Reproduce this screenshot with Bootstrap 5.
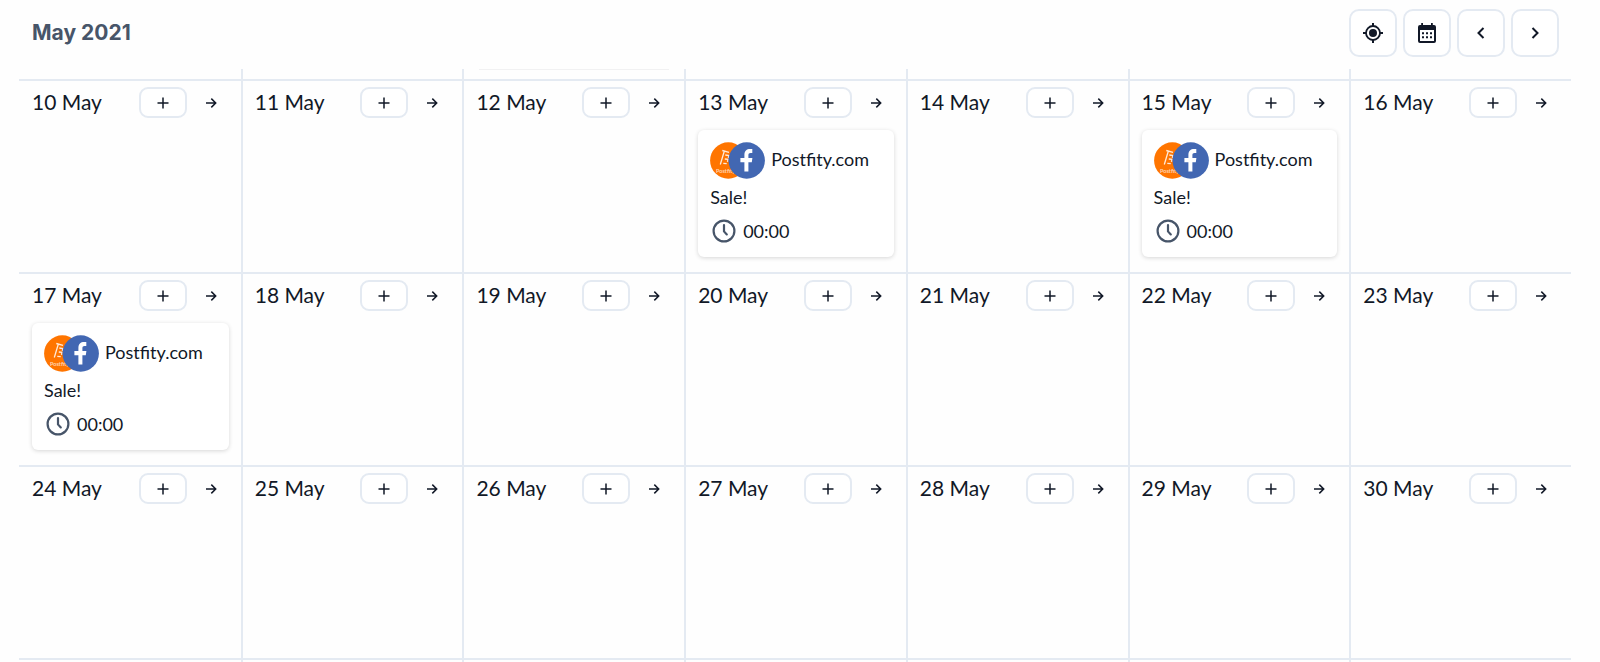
<!DOCTYPE html>
<html lang="en">
<head>
<meta charset="utf-8">
<meta name="viewport" content="width=device-width, initial-scale=1">
<title>Post calendar – May 2021</title>
<link rel="stylesheet" href="https://cdn.jsdelivr.net/npm/bootstrap@5.3.0/dist/css/bootstrap.min.css">
<style>
  :root { --line: #e4eaf2; --ink: #111827; --slate: #475569; }
  body { font-family: Lato, sans-serif; color: var(--ink); background: #fefefe; }
  .planner { padding: 0 29px 0 19px; height: 100vh; overflow: hidden; }
  .planner-head { padding: 9px 12px 12px 13px; flex: none; }
  .month-title { font: 700 21px/28px Inter, sans-serif; color: var(--slate); }
  .tool-row { gap: 6px; }
  .tool-btn, .add-btn { background: #fff; border: 2px solid var(--line); color: var(--ink); padding: 0; display: flex; align-items: center; justify-content: center; }
  .tool-btn { width: 48px; height: 48px; border-radius: 10px; }
  .add-btn { width: 48px; height: 31px; border-radius: 9px; }
  .go-btn { width: 36px; height: 31px; padding: 0; border: 0; color: var(--ink); background: none; display: flex; align-items: center; justify-content: center; margin-left: 6px; }
  .week { display: grid; grid-template-columns: repeat(7, minmax(0, 1fr)); border-bottom: 2px solid var(--line); min-height: 193px; }
  .week-past { min-height: 12px; height: 12px; }
  .day { padding: 6px 12px 14px; }
  .day:first-child { padding-left: 13px; }
  .day + .day { border-left: 2px solid var(--line); }
  .week-past .day { padding: 0 12px; }
  .card-edge { height: 1px; margin: 0 3px; background: #f1f1f2; }
  .day-label { font-size: 21px; line-height: 30px; }
  .post { margin-top: 12px; padding: 12px; border-radius: 6px; background: #fff; box-shadow: 0 1px 4px rgba(0, 0, 0, .16); font-size: 18px; line-height: 28px; }
  .post-author { gap: 6px; height: 37px; line-height: 35px; }
  .post-text { margin-top: 4px; }
  .post-time { margin-top: 6px; gap: 7px; padding-left: 2px; }
  svg { display: block; flex: none; }
</style>
</head>
<body>
<svg class="d-none" aria-hidden="true">
  <symbol id="i-plus" viewBox="0 0 12 12"><path d="M6 .5v11M.5 6h11" fill="none" stroke="currentColor" stroke-width="1.5"/></symbol>
  <symbol id="i-arrow" viewBox="0 0 12 12"><path d="M1 6h9.500M6.300 1.600 10.700 6l-4.400 4.400" fill="none" stroke="currentColor" stroke-width="1.500"/></symbol>
  <symbol id="i-clock" viewBox="0 0 24 24"><circle cx="12" cy="12" r="10.400" fill="none" stroke="#475569" stroke-width="2.200"/><path d="M12 6v6.400l2.800 3" fill="none" stroke="#475569" stroke-width="2.200" stroke-linecap="round"/></symbol>
  <symbol id="i-accounts" viewBox="0 0 55 37">
    <circle cx="18.300" cy="18.500" r="18.200" fill="#ff7500"/>
    <path d="M12.300 8.500 19 10.300M14.200 9.500 10.300 22.500M15.300 13l3.500.5-.4 2.500M14.800 17l3.200.4-.5 2.500M13.300 21.300l3.400.4" fill="none" stroke="#fff" stroke-opacity=".85" stroke-width="1.300"/>
    <text x="6" y="31" font-family="Lato, sans-serif" font-size="5.500" font-weight="700" fill="#fff" fill-opacity=".7">Postfity</text>
    <circle cx="36.700" cy="18.500" r="18.200" fill="#4267b2"/>
    <path d="M34.400 29.500V20.300h-4v-4.300h4v-3.200c0-3.900 2.300-5.900 5.700-5.900.9 0 1.700.1 2.200.2v4h-1.700c-1.600 0-2.200.8-2.200 2.200v2.700h4l-.6 4.300h-3.400v9.200z" fill="#fff"/>
  </symbol>
</svg>
<main class="planner d-flex flex-column">
  <header class="planner-head d-flex justify-content-between align-items-center">
    <h1 class="month-title mb-0">May 2021</h1>
    <div class="tool-row d-flex">
      <button class="tool-btn" type="button" aria-label="Today"><svg width="20" height="20" viewBox="0 0 20 20"><circle cx="10" cy="10" r="4" fill="currentColor"/><circle cx="10" cy="10" r="7" fill="none" stroke="currentColor" stroke-width="1.800"/><path d="M10 0v3M10 17v3M0 10h3M17 10h3" stroke="currentColor" stroke-width="2"/></svg></button>
      <button class="tool-btn" type="button" aria-label="Pick a date"><svg width="20" height="20" viewBox="0 0 20 20"><path fill="currentColor" fill-rule="evenodd" d="M4.200 0H6v2h8V0h1.800v2H17a2 2 0 0 1 2 2v14a2 2 0 0 1-2 2H3a2 2 0 0 1-2-2V4a2 2 0 0 1 2-2h1.200zM3 7v11h14V7zM5 9.200h2v2H5zm4 0h2v2H9zm4 0h2v2h-2zM5 13.300h2v2H5zm4 0h2v2H9zm4 0h2v2h-2z"/></svg></button>
      <button class="tool-btn" type="button" aria-label="Previous"><svg width="12" height="12" viewBox="0 0 12 12"><path d="M8.500 1 3.500 6l5 5" fill="none" stroke="currentColor" stroke-width="2"/></svg></button>
      <button class="tool-btn" type="button" aria-label="Next"><svg width="12" height="12" viewBox="0 0 12 12"><path d="m3.500 1 5 5-5 5" fill="none" stroke="currentColor" stroke-width="2"/></svg></button>
    </div>
  </header>
  <div id="weeks" class="flex-grow-1 overflow-hidden"></div>
</main>
<script>
  const icon = (id, w, h) => `<svg width="${w}" height="${h}" aria-hidden="true"><use href="#${id}"/></svg>`;
  const post = `<article class="post">
      <div class="post-author d-flex align-items-start">${icon('i-accounts', 55, 37)}<span>Postfity.com</span></div>
      <div class="post-text">Sale!</div>
      <div class="post-time d-flex align-items-center">${icon('i-clock', 24, 24)}<time>00:00</time></div>
    </article>`;
  const postDays = [13, 15, 17];
  const day = n => `<section class="day">
      <div class="d-flex align-items-start">
        <span class="day-label me-auto">${n} May</span>
        <button class="add-btn" type="button" aria-label="Add post on ${n} May">${icon('i-plus', 12, 12)}</button>
        <button class="go-btn" type="button" aria-label="Open ${n} May">${icon('i-arrow', 12, 12)}</button>
      </div>${postDays.includes(n) ? post : ''}
    </section>`;
  const past = Array.from({ length: 7 }, (_, i) => `<div class="day">${i === 2 ? '<div class="card-edge"></div>' : ''}</div>`).join('');
  const empty = '<div class="day"></div>'.repeat(7);
  let html = `<div class="week week-past">${past}</div>`;
  for (const start of [10, 17, 24]) {
    html += `<div class="week">${Array.from({ length: 7 }, (_, i) => day(start + i)).join('')}</div>`;
  }
  document.getElementById('weeks').innerHTML = html + `<div class="week">${empty}</div>`;
</script>
<script src="https://cdn.jsdelivr.net/npm/bootstrap@5.3.0/dist/js/bootstrap.bundle.min.js"></script>
</body>
</html>
